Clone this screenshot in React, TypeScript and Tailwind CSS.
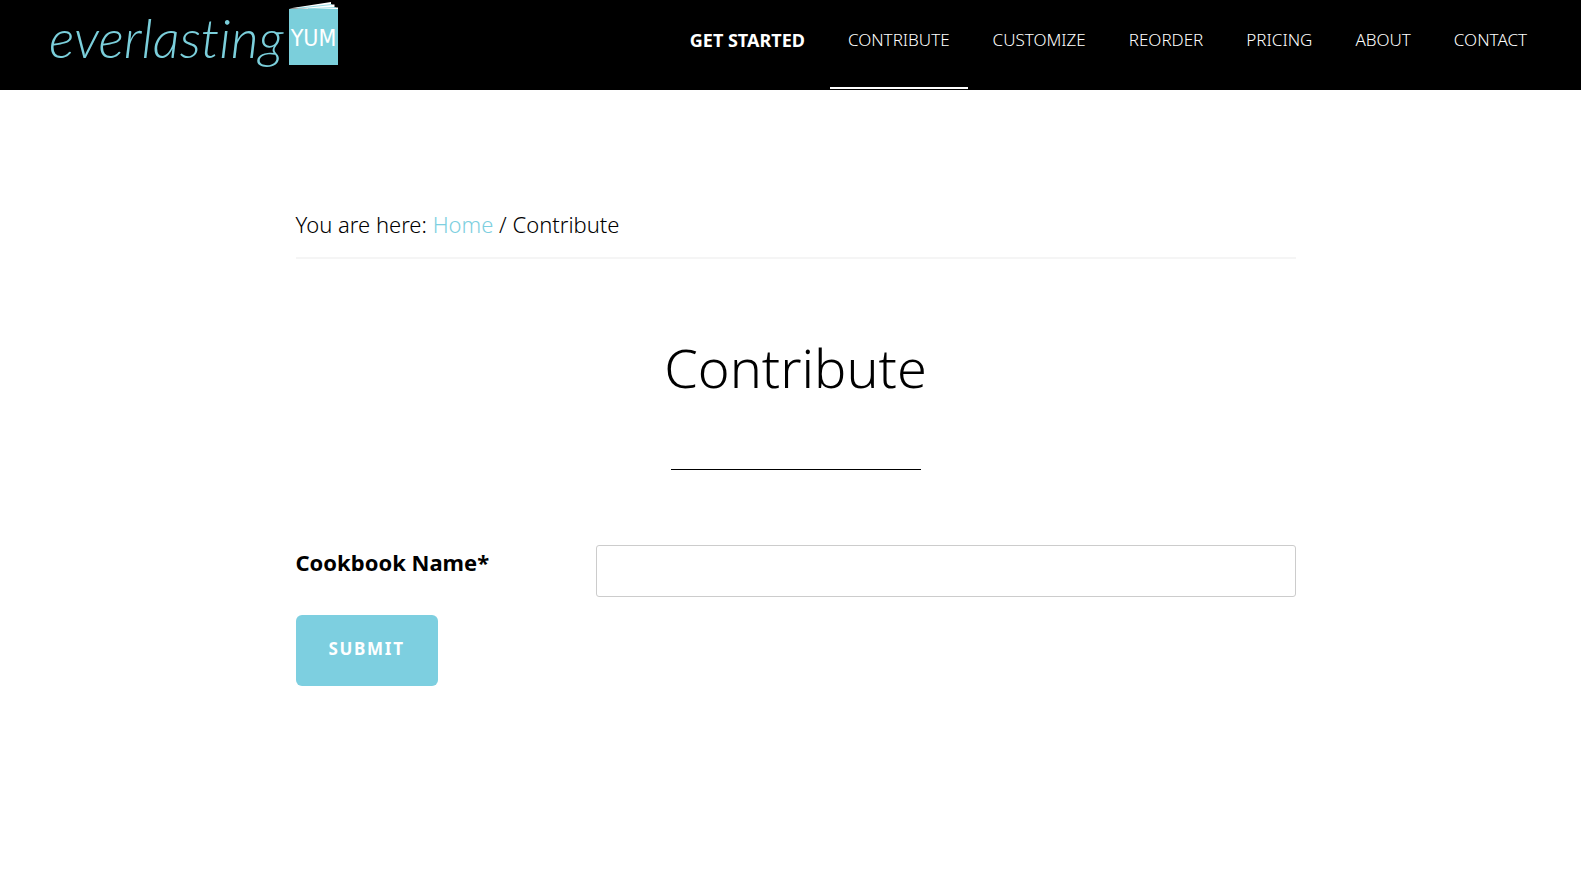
import { useState } from 'react';

const navItems = [
  { label: 'Get Started', bold: true },
  { label: 'Contribute', active: true },
  { label: 'Customize' },
  { label: 'Reorder' },
  { label: 'Pricing' },
  { label: 'About' },
  { label: 'Contact' },
];

function Logo() {
  return (
    <svg width="300" height="89" viewBox="0 0 300 89" role="img" aria-label="Everlasting Yum">
      <text
        x="7"
        y="58"
        className="[font-variant-ligatures:none]"
        fontFamily="Lato, sans-serif"
        fontStyle="italic"
        fontWeight="300"
        fontSize="54"
        fill="#7bcfdb"
      >
        everlasting
      </text>
      {/* Loose pages sticking out of the book */}
      <path d="M247 8.500 L289 2 L289 4.500 L292.500 4.500 L292.500 7.500 L296 7.500 L296 9.500 Z" fill="#ffffff" />
      <path d="M256 8.200 L290 4.500 M266 8.800 L294 7.500" stroke="#7bcfdb" strokeWidth="0.800" fill="none" />
      <rect x="247" y="9" width="49" height="56" fill="#7bcfdb" />
      <text
        x="271.500"
        y="46"
        textAnchor="middle"
        fontFamily="'DejaVu Sans Condensed', 'DejaVu Sans', sans-serif"
        fontWeight="400"
        fontSize="23"
        fill="#ffffff"
      >
        YUM
      </text>
    </svg>
  );
}

export default function ContributePage() {
  const [cookbookName, setCookbookName] = useState('');

  return (
    <div className="min-h-screen bg-white font-['Noto_Sans','Open_Sans',sans-serif] font-light text-black">
      {/* Header */}
      <header className="flex justify-between bg-black pr-9 pb-px pl-[42px]">
        <a href="#home" className="block">
          <Logo />
        </a>
        <nav className="flex gap-[7px]">
          {navItems.map((item) => (
            <a
              key={item.label}
              href={`#${item.label.toLowerCase().replace(' ', '-')}`}
              className={`flex h-[89px] items-start border-b-2 px-[18px] pt-7 leading-6 whitespace-nowrap uppercase text-white ${
                item.active ? 'border-white' : 'border-transparent'
              } ${item.bold ? 'text-lg font-bold' : 'text-[17px]'}`}
            >
              {item.label}
            </a>
          ))}
        </nav>
      </header>

      <main className="pt-[116px] pl-2.5">
        <div className="mx-auto max-w-[1000px]">
          <div className="border-b-2 border-[#f5f5f5] pb-[15px] text-[22px] leading-9">
            You are here:{' '}
            <a href="#home" className="text-[#7dcfe0]">
              Home
            </a>{' '}
            / Contribute
          </div>

          <h1 className="mt-[72px] text-center text-[54px] leading-[72px]">Contribute</h1>
          <hr className="mx-auto mt-[66px] w-[250px] border-black" />

          {/* Cookbook lookup form */}
          <form className="mt-[75px]" onSubmit={(e) => e.preventDefault()}>
            <div className="flex items-start">
              <label htmlFor="cookbook-name" className="w-[30%] text-[22px] leading-[34px] font-bold">
                Cookbook Name*
              </label>
              <input
                id="cookbook-name"
                type="text"
                value={cookbookName}
                onChange={(e) => setCookbookName(e.target.value)}
                className="h-[52px] flex-1 rounded-[3px] border border-[#cccccc] bg-white px-4 text-xl"
              />
            </div>
            <button
              type="submit"
              className="mt-[18px] h-[71px] rounded-md bg-[#7dcfe0] px-[33px] pb-1 text-[17px] font-bold tracking-widest text-white uppercase"
            >
              Submit
            </button>
          </form>
        </div>
      </main>
    </div>
  );
}
